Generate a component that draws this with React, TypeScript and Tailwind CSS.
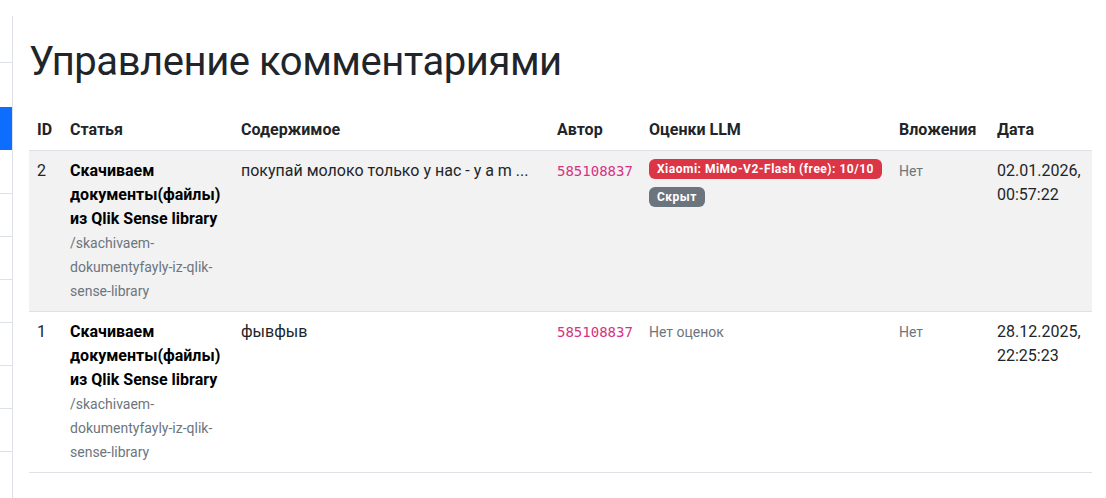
const rows = [
  {
    id: 2,
    title: "Скачиваем документы(файлы) из Qlik Sense library",
    slug: "/skachivaem-dokumentyfayly-iz-qlik-sense-library",
    content: "покупай молоко только у нас - y a m ...",
    author: "585108837",
    scores: ["Xiaomi: MiMo-V2-Flash (free): 10/10"],
    hidden: true,
    files: "Нет",
    date: "02.01.2026, 00:57:22",
  },
  {
    id: 1,
    title: "Скачиваем документы(файлы) из Qlik Sense library",
    slug: "/skachivaem-dokumentyfayly-iz-qlik-sense-library",
    content: "фывфыв",
    author: "585108837",
    scores: [] as string[],
    hidden: false,
    files: "Нет",
    date: "28.12.2025, 22:25:23",
  },
];

function Sidebar() {
  return (
    <aside className="mt-[16px] w-[13px] shrink-0 border-r border-[#dee2e6]">
      <div className="h-[47px] border-b border-[#dee2e6]" />
      <div className="h-[44px]" />
      <div className="h-[43px] bg-[#0d6efd]" />
      <div className="h-[44px] border-b border-[#dee2e6]" />
      {[0, 1, 2, 3, 4, 5].map((i) => (
        <div key={i} className="h-[43px] border-b border-[#dee2e6]" />
      ))}
    </aside>
  );
}

export default function App() {
  return (
    <div
      className="flex min-h-[498px] bg-white text-[#212529]"
      style={{ fontFamily: "Roboto, 'Noto Sans', sans-serif" }}
    >
      <Sidebar />
      <main className="flex-1 pl-[16px] pr-[14px] pt-[38px]">
        <h1 className="mb-[24px] text-[40px] font-normal leading-[48px] tracking-[-0.45px]">Управление комментариями</h1>

        <table className="w-full table-fixed border-collapse text-[16px] leading-[24px]">
          <colgroup>
            <col className="w-[33px]" />
            <col className="w-[171px]" />
            <col className="w-[316px]" />
            <col className="w-[92px]" />
            <col className="w-[250px]" />
            <col className="w-[98px]" />
            <col />
          </colgroup>
          <thead>
            <tr className="border-b border-[#dee2e6] text-left">
              <th className="p-2 font-bold">ID</th>
              <th className="p-2 font-bold">Статья</th>
              <th className="p-2 font-bold">Содержимое</th>
              <th className="p-2 font-bold">Автор</th>
              <th className="p-2 font-bold">Оценки LLM</th>
              <th className="p-2 font-bold">Вложения</th>
              <th className="p-2 font-bold">Дата</th>
            </tr>
          </thead>
          <tbody>
            {rows.map((r, i) => (
              <tr key={r.id} className={`border-b border-[#dee2e6] align-top ${i % 2 === 0 ? "bg-[#f2f2f2]" : ""}`}>
                <td className="p-2">{r.id}</td>
                <td className="p-2">
                  <div className="font-bold text-black">{r.title}</div>
                  <div className="break-words text-[14px] text-[#6c757d]">{r.slug}</div>
                </td>
                <td className="p-2">{r.content}</td>
                <td className="p-2">
                  <code className="text-[14px] text-[#d63384]" style={{ fontFamily: "'DejaVu Sans Mono', monospace" }}>
                    {r.author}
                  </code>
                </td>
                <td className="p-2">
                  {r.scores.length === 0 ? (
                    <span className="text-[14px] text-[#6c757d]">Нет оценок</span>
                  ) : (
                    <div className="flex flex-col items-start gap-[8px]">
                      {r.scores.map((s) => (
                        <span key={s} className="inline-block whitespace-nowrap rounded-[6px] bg-[#dc3545] px-[8px] py-[4px] text-[12px] font-bold leading-[12px] tracking-[0.5px] text-white">
                          {s}
                        </span>
                      ))}
                      {r.hidden && (
                        <span className="inline-block whitespace-nowrap rounded-[6px] bg-[#6c757d] px-[8px] py-[4px] text-[12px] font-bold leading-[12px] tracking-[0.5px] text-white">
                          Скрыт
                        </span>
                      )}
                    </div>
                  )}
                </td>
                <td className="p-2 text-[14px] text-[#6c757d]">{r.files}</td>
                <td className="p-2">{r.date}</td>
              </tr>
            ))}
          </tbody>
        </table>
      </main>
    </div>
  );
}
